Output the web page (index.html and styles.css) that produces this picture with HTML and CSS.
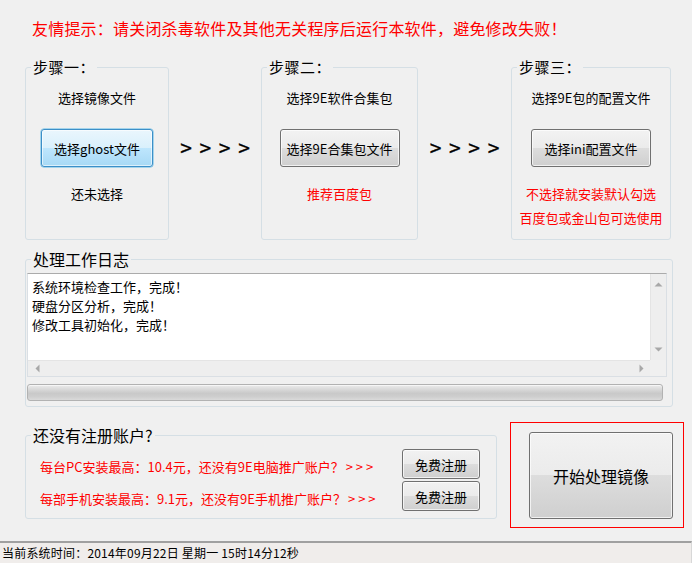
FILE: index.html
```html
<!DOCTYPE html>
<html lang="zh-CN">
<head>
<meta charset="utf-8">
<title>9E</title>
<link rel="stylesheet" href="styles.css">
</head>
<body>
<div class="app">
  <p class="notice">友情提示：请关闭杀毒软件及其他无关程序后运行本软件，避免修改失败！</p>

  <div class="steps">
    <fieldset class="group step">
      <legend>步骤一：</legend>
      <div class="step-body">
        <div class="step-title">选择镜像文件</div>
        <button class="btn btn-hot step-btn s1-btn">选择ghost文件</button>
        <div class="step-note">还未选择</div>
      </div>
    </fieldset>
    <div class="arrows">&gt; &gt; &gt; &gt;</div>
    <fieldset class="group step">
      <legend>步骤二：</legend>
      <div class="step-body">
        <div class="step-title">选择9E软件合集包</div>
        <button class="btn step-btn">选择9E合集包文件</button>
        <div class="step-note red">推荐百度包</div>
      </div>
    </fieldset>
    <div class="arrows">&gt; &gt; &gt; &gt;</div>
    <fieldset class="group step">
      <legend>步骤三：</legend>
      <div class="step-body">
        <div class="step-title">选择9E包的配置文件</div>
        <button class="btn step-btn">选择ini配置文件</button>
        <div class="step-note red">不选择就安装默认勾选</div>
        <div class="step-note2 red">百度包或金山包可选使用</div>
      </div>
    </fieldset>
  </div>

  <fieldset class="group log">
    <legend>处理工作日志</legend>
    <div class="log-body">
      <div class="textbox">
        <div class="textbox-content">
          <div>系统环境检查工作，完成！</div>
          <div>硬盘分区分析，完成！</div>
          <div>修改工具初始化，完成！</div>
        </div>
        <div class="vscroll">
          <svg class="arr" width="9" height="5" viewBox="0 0 9 5"><path d="M0.5 4.5 L4.5 0.5 L8.5 4.5 Z" fill="#a8a8a8"/></svg>
          <svg class="arr" width="9" height="5" viewBox="0 0 9 5"><path d="M0.5 0.5 L4.5 4.5 L8.5 0.5 Z" fill="#a8a8a8"/></svg>
        </div>
        <div class="hscroll">
          <svg class="arr" width="5" height="9" viewBox="0 0 5 9"><path d="M4.5 0.5 L0.5 4.5 L4.5 8.5 Z" fill="#a8a8a8"/></svg>
          <svg class="arr" width="5" height="9" viewBox="0 0 5 9"><path d="M0.5 0.5 L4.5 4.5 L0.5 8.5 Z" fill="#a8a8a8"/></svg>
        </div>
        <div class="corner"></div>
      </div>
      <div class="progress"></div>
    </div>
  </fieldset>

  <div class="bottom">
    <fieldset class="group reg">
      <legend>还没有注册账户?</legend>
      <div class="reg-body">
        <div class="reg-row">
          <span class="reg-text red">每台PC安装最高：10.4元，还没有9E电脑推广账户？<span class="gt">&gt;&gt;&gt;</span></span>
          <button class="btn reg-btn">免费注册</button>
        </div>
        <div class="reg-row">
          <span class="reg-text red">每部手机安装最高：9.1元，还没有9E手机推广账户？<span class="gt">&gt;&gt;&gt;</span></span>
          <button class="btn reg-btn">免费注册</button>
        </div>
      </div>
    </fieldset>
    <div class="start-frame">
      <button class="btn start-btn">开始处理镜像</button>
    </div>
  </div>

  <div class="status">当前系统时间：2014年09月22日 星期一 15时14分12秒</div>
</div>
</body>
</html>
```

FILE: styles.css
```css
* { box-sizing: border-box; }
html, body {
  margin: 0;
  padding: 0;
  background: #f0f0f0;
}
body {
  font-family: "Noto Sans CJK SC", "Noto Sans", sans-serif;
  font-size: 13px;
  color: #000;
}
.app {
  width: 692px;
  height: 563px;
  display: flex;
  flex-direction: column;
  overflow: hidden;
}
.red { color: #ff0000; }

.notice {
  margin: 0;
  padding: 18px 0 0 32px;
  height: 38px;
  font-size: 16px;
  line-height: 20px;
  color: #ff0000;
  white-space: nowrap;
  letter-spacing: 0.2px;
}

/* group boxes */
.group {
  margin: 0;
  padding: 0;
  min-width: 0;
  border: 1px solid #d5dfe5;
  border-radius: 3px;
  text-align: left;
}
.group legend {
  margin-left: 5px;
  padding: 0 2px;
  font-size: 15px;
  line-height: 16px;
  text-align: left;
  letter-spacing: 0.5px;
}

.steps {
  margin-top: 21px;
  padding-left: 25px;
  display: grid;
  grid-template-columns: 144px 92px 157px 93px 160px;
  align-items: start;
}
.step {
  height: 181px;
}
.step-body {
  display: flex;
  flex-direction: column;
  align-items: center;
  text-align: center;
}
.step-title {
  margin-top: 14px;
  line-height: 18px;
  white-space: nowrap;
}
.step-note {
  margin-top: 18px;
  line-height: 18px;
  white-space: nowrap;
}
.step-note2 {
  margin-top: 6px;
  line-height: 18px;
  white-space: nowrap;
}
.arrows {
  margin-top: 76px;
  text-align: center;
  font-size: 21px;
  line-height: 24px;
  word-spacing: 3px;
  white-space: nowrap;
  -webkit-text-stroke: 0.3px #000;
}

/* buttons */
.btn {
  font-family: inherit;
  font-size: 13px;
  color: #000;
  border: 1px solid #707070;
  border-radius: 3px;
  background: linear-gradient(#f2f2f2 0%, #ebebeb 50%, #dddddd 50%, #cfcfcf 100%);
  box-shadow: inset 0 0 0 1px rgba(255,255,255,0.7);
  padding: 0;
  white-space: nowrap;
}
.btn-hot {
  border-color: #3c8fc8;
  background: linear-gradient(#eaf6fd 0%, #d9f0fc 50%, #bee6fd 50%, #a7d9f5 100%);
  box-shadow: inset 0 0 0 1px rgba(255,255,255,0.6), 0 0 0 0.5px #5ab8e6;
}
.step-btn {
  margin-top: 22px;
  width: 120px;
  height: 38px;
}
.s1-btn { width: 112px; }

/* log */
.log {
  margin: 10px 0 0 25px;
  width: 648px;
}
.log legend {
  font-size: 16px;
  line-height: 18px;
  letter-spacing: 0;
}
.log-body {
  padding: 5px 5px 5px 1px;
}
.textbox {
  width: 640px;
  height: 104px;
  border: 1px solid #dadfe4;
  border-top-color: #ababab;
  background: #fff;
  display: grid;
  grid-template-columns: 1fr 16px;
  grid-template-rows: 1fr 16px;
}
.textbox-content {
  padding: 3px 0 0 4px;
  line-height: 19px;
}
.vscroll {
  background: #eeeeee;
  border-left: 1px solid #e4e4e4;
  display: flex;
  flex-direction: column;
  justify-content: space-between;
  align-items: center;
  padding: 8px 0 8px;
}
.hscroll {
  background: #eeeeee;
  border-top: 1px solid #e4e4e4;
  display: flex;
  justify-content: space-between;
  align-items: center;
  padding: 0 6px 0 7px;
}
.corner { background: #f0f0f0; }
.arr { display: block; }
.progress {
  margin-top: 7px;
  width: 636px;
  height: 17px;
  border: 1px solid #b2b2b2;
  border-radius: 3px;
  background: linear-gradient(#ececec 0%, #dcdcdc 25%, #c9c9c9 55%, #cdcdcd 75%, #dadada 100%);
  box-shadow: inset 0 1px 0 #f6f6f6;
}

/* bottom */
.bottom {
  margin-top: 15px;
  display: flex;
  align-items: flex-start;
}
.reg {
  margin: 4px 0 0 25px;
  width: 472px;
}
.reg legend {
  font-size: 16px;
  line-height: 18px;
  letter-spacing: 0;
}
.reg-body {
  padding: 5px 16px 7px 14px;
}
.reg-row {
  display: flex;
  align-items: center;
  justify-content: space-between;
  height: 30px;
}
.reg-row + .reg-row { margin-top: 2px; }
.reg-text {
  padding-top: 5px;
  line-height: 18px;
  white-space: nowrap;
}
.gt {
  margin-left: 2px;
  letter-spacing: 3px;
}
.reg-btn {
  width: 78px;
  height: 30px;
}
.start-frame {
  margin-left: 13px;
  width: 174px;
  height: 106px;
  border: 1px solid #ff0000;
  padding: 9px 10px 0 18px;
}
.start-btn {
  width: 144px;
  height: 87px;
  font-size: 16px;
}

/* status bar */
.status {
  margin-top: 13px;
  flex: 1;
  border-top: 2px solid #a0a0a0;
  border-right: 1px solid #d8d8d8;
  background: #f0edeb;
  padding-left: 2px;
  font-size: 12px;
  letter-spacing: 0.2px;
  line-height: 20px;
  white-space: nowrap;
}
```
